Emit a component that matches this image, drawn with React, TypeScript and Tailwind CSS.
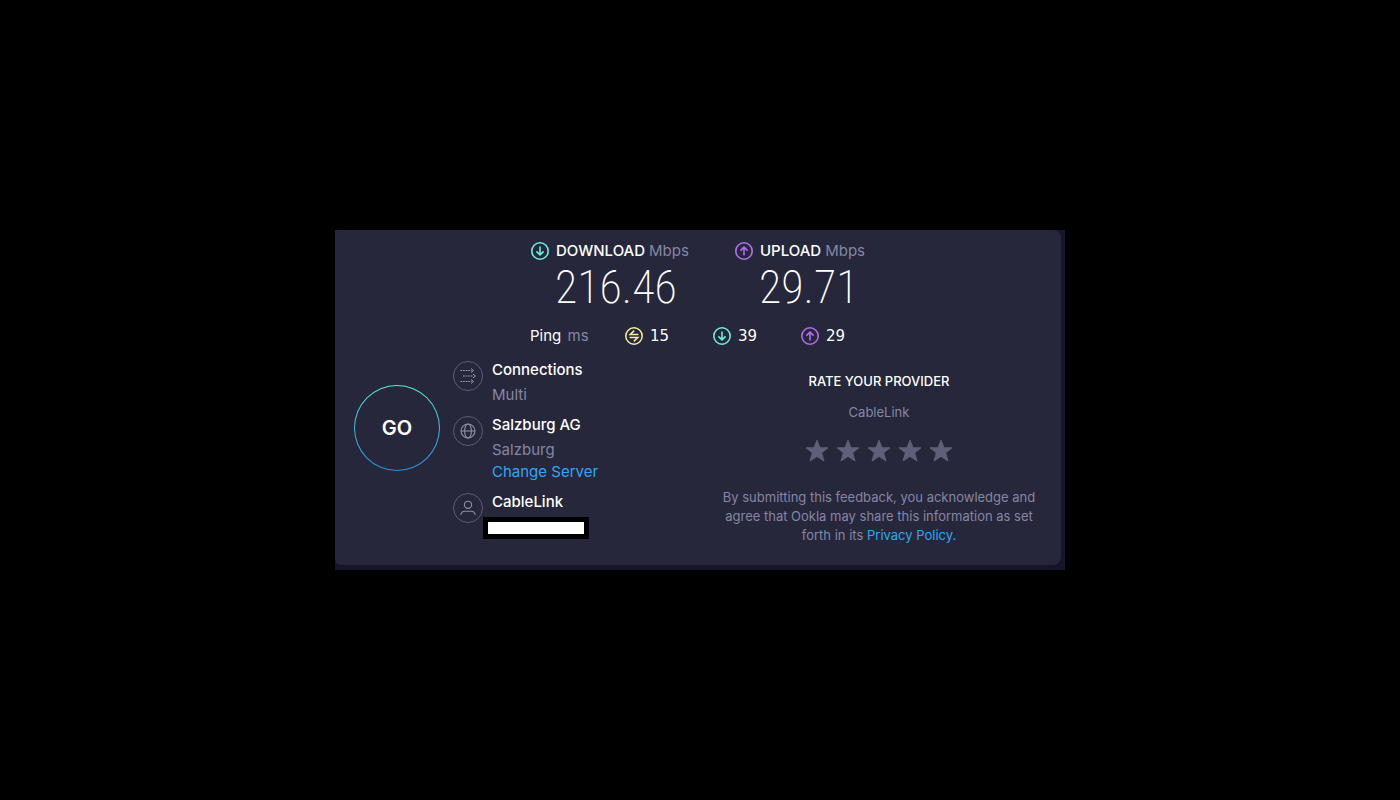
import { useState } from "react";

const DownloadIcon = () => (
  <svg viewBox="0 0 20 20" className="h-5 w-5 shrink-0" fill="none" stroke="#6bede0" strokeWidth="1.6" aria-hidden="true">
    <circle cx="10" cy="10" r="8.2" />
    <path d="M10 5.6v8M6.4 10.4l3.6 3.4 3.6-3.4" />
  </svg>
);

const UploadIcon = () => (
  <svg viewBox="0 0 20 20" className="h-5 w-5 shrink-0" fill="none" stroke="#b36df0" strokeWidth="1.6" aria-hidden="true">
    <circle cx="10" cy="10" r="8.2" />
    <path d="M10 14.4v-8M6.4 9.6L10 6.2l3.6 3.4" />
  </svg>
);

const PingIcon = () => (
  <svg viewBox="0 0 20 20" className="h-5 w-5 shrink-0" fill="none" stroke="#f5ef9c" strokeWidth="1.5" aria-hidden="true">
    <circle cx="10" cy="10" r="8.2" />
    <path d="M14.4 8.4H6.2l4-3.8M5.6 11.6h8.200l-4 3.800" />
  </svg>
);

const ConnectionsIcon = () => (
  <svg viewBox="0 0 16 16" className="h-4 w-4" fill="none" stroke="#a3a4b8" strokeWidth="1" aria-hidden="true">
    <path d="M.5 2.500h11M3 8h10M.5 13.500h11" strokeDasharray="1.6 1" />
    <path d="M11 .5l2.400 2-2.400 2M13 6l2.400 2-2.400 2M11 11.500l2.400 2-2.400 2" />
  </svg>
);

const GlobeIcon = () => (
  <svg viewBox="0 0 16 16" className="h-4 w-4" fill="none" stroke="#8f90a6" strokeWidth="1.1" aria-hidden="true">
    <circle cx="8" cy="8" r="7" />
    <ellipse cx="8" cy="8" rx="3.4" ry="7" />
    <path d="M1 8h14" />
  </svg>
);

const UserIcon = () => (
  <svg viewBox="0 0 16 16" className="h-4 w-4" fill="none" stroke="#8f90a6" strokeWidth="1.1" aria-hidden="true">
    <circle cx="8" cy="4.8" r="3.6" />
    <path d="M.8 15c.4-2.600 2-3.800 4.200-3.800h6c2.200 0 3.800 1.200 4.200 3.800" />
  </svg>
);

const StarIcon = () => (
  <svg viewBox="0 0 24 24" className="h-6 w-6" fill="currentColor" stroke="currentColor" strokeLinejoin="round" aria-hidden="true">
    <path d="M12 1.200l3 7.600h8l-6.400 5 2.400 8.200L12 17.400 5 22l2.400-8.200-6.400-5h8z" />
  </svg>
);

const IconRing = ({ children }: { children: React.ReactNode }) => (
  <div className="mt-px flex h-[30px] w-[30px] shrink-0 items-center justify-center rounded-full border border-[#5c5d75]">
    {children}
  </div>
);

const results = [
  { label: "DOWNLOAD", value: "216.46", icon: <DownloadIcon /> },
  { label: "UPLOAD", value: "29.71", icon: <UploadIcon /> },
];

const pings = [
  { name: "Idle", value: 15, icon: <PingIcon /> },
  { name: "Download", value: 39, icon: <DownloadIcon /> },
  { name: "Upload", value: 29, icon: <UploadIcon /> },
];

const App = () => {
  const [rating, setRating] = useState(0);

  return (
    <main className="flex min-h-screen items-center justify-center bg-black font-['Inter','Liberation_Sans',sans-serif] text-[15px] text-white">
      <div className="w-full max-w-[730px] bg-[#16152b] pr-1 pb-[5px]">
        <div className="rounded-r-lg rounded-bl-md bg-[#26273b] pt-[11px] pr-[22px] pb-5 pl-[19px]">
          <section className="pl-44">
            <div className="flex">
              {results.map((item) => (
                <div key={item.label} className="w-[204px]">
                  <h2 className="flex items-center gap-1.5 leading-5 font-medium">
                    {item.icon}
                    <span>
                      {item.label} <span className="font-normal text-[#8586a3]">Mbps</span>
                    </span>
                  </h2>
                  <p className="pt-1 pl-[25px] font-['Roboto_Condensed','Liberation_Sans_Narrow','Roboto',sans-serif] text-[46px] leading-[44px] font-extralight">
                    {item.value}
                  </p>
                </div>
              ))}
            </div>
            <div className="flex items-center pt-[17px] leading-5">
              <p className="w-[94px]">
                Ping <span className="pl-0.5 text-[#8586a3]">ms</span>
              </p>
              {pings.map((ping) => (
                <p key={ping.name} className="flex w-[88px] items-center gap-1.5 font-['DejaVu_Sans',sans-serif]">
                  {ping.icon}
                  {ping.value}
                </p>
              ))}
            </div>
          </section>

          <div className="flex items-start pt-[14px]">
            <button
              type="button"
              className="mt-[25px] h-[86px] w-[86px] shrink-0 rounded-full bg-linear-to-b from-[#5de8d4] to-[#2a8fdc] p-px"
            >
              <span className="flex h-full items-center justify-center rounded-full bg-[#26273b] text-xl font-semibold">GO</span>
            </button>

            <ul className="ml-[13px] flex-1 space-y-[9px]">
              <li className="flex gap-[9px]">
                <IconRing><ConnectionsIcon /></IconRing>
                <div>
                  <h3 className="leading-5 font-medium">Connections</h3>
                  <p className="pt-1 leading-[22px] text-[#8586a3]">Multi</p>
                </div>
              </li>
              <li className="flex gap-[9px]">
                <IconRing><GlobeIcon /></IconRing>
                <div>
                  <h3 className="leading-5 font-medium">Salzburg AG</h3>
                  <p className="pt-1 leading-[22px] text-[#8586a3]">Salzburg</p>
                  <a href="#servers" className="block leading-[22px] text-[#2ea8f5]">Change Server</a>
                </div>
              </li>
              <li className="flex gap-[9px]">
                <IconRing><UserIcon /></IconRing>
                <div>
                  <h3 className="leading-5 font-medium">CableLink</h3>
                  <div className="mt-[5px] -ml-[9px] h-[22px] w-[106px] border-5 border-black bg-white" />
                </div>
              </li>
            </ul>

            <section className="w-80 pt-[11px] text-center text-[13px]">
              <h2 className="leading-5 font-medium">RATE YOUR PROVIDER</h2>
              <p className="pt-[11px] leading-5 text-[#8586a3]">CableLink</p>
              <div className="flex justify-center gap-[7px] pt-[17px]">
                {[1, 2, 3, 4, 5].map((star) => (
                  <button
                    key={star}
                    type="button"
                    aria-label={`${star} stars`}
                    onClick={() => setRating(star)}
                    className={star <= rating ? "text-[#f5ef9c]" : "text-[#5f6077]"}
                  >
                    <StarIcon />
                  </button>
                ))}
              </div>
              <p className="pt-[25px] leading-[19px] text-[#8586a3]">
                By submitting this feedback, you acknowledge and agree that Ookla may share this information as set forth in its{" "}
                <a href="#privacy" className="text-[#2ea8f5]">Privacy Policy.</a>
              </p>
            </section>
          </div>
        </div>
      </div>
    </main>
  );
};

export default App;
